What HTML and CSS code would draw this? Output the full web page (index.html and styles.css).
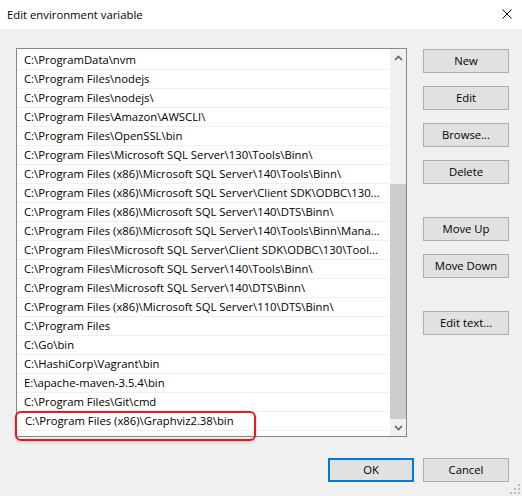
FILE: index.html
```html
<!DOCTYPE html>
<html lang="en">
<head>
<meta charset="utf-8">
<title>Edit environment variable</title>
<link rel="stylesheet" href="styles.css">
</head>
<body>
<div class="window">
  <div class="titlebar">
    <span class="title">Edit environment variable</span>
    <svg class="close" width="10" height="10" viewBox="0 0 10 10"><path d="M0.5 0.5 L9.5 9.5 M9.5 0.5 L0.5 9.5" stroke="#000" stroke-width="1" fill="none"/></svg>
  </div>
  <div class="client">
    <div class="main">
      <div class="listbox">
        <ul class="rows">
          <li class="row">C:\ProgramData\nvm</li>
          <li class="row">C:\Program Files\nodejs</li>
          <li class="row">C:\Program Files\nodejs\</li>
          <li class="row">C:\Program Files\Amazon\AWSCLI\</li>
          <li class="row">C:\Program Files\OpenSSL\bin</li>
          <li class="row">C:\Program Files\Microsoft SQL Server\130\Tools\Binn\</li>
          <li class="row">C:\Program Files (x86)\Microsoft SQL Server\140\Tools\Binn\</li>
          <li class="row">C:\Program Files (x86)\Microsoft SQL Server\Client SDK\ODBC\130...</li>
          <li class="row">C:\Program Files (x86)\Microsoft SQL Server\140\DTS\Binn\</li>
          <li class="row">C:\Program Files (x86)\Microsoft SQL Server\140\Tools\Binn\Mana...</li>
          <li class="row">C:\Program Files\Microsoft SQL Server\Client SDK\ODBC\130\Tool...</li>
          <li class="row">C:\Program Files\Microsoft SQL Server\140\Tools\Binn\</li>
          <li class="row">C:\Program Files\Microsoft SQL Server\140\DTS\Binn\</li>
          <li class="row">C:\Program Files (x86)\Microsoft SQL Server\110\DTS\Binn\</li>
          <li class="row">C:\Program Files</li>
          <li class="row">C:\Go\bin</li>
          <li class="row">C:\HashiCorp\Vagrant\bin</li>
          <li class="row">E:\apache-maven-3.5.4\bin</li>
          <li class="row">C:\Program Files\Git\cmd</li>
          <li class="row editing">C:\Program Files (x86)\Graphviz2.38\bin</li>
          <li class="row"></li>
        </ul>
        <div class="scrollbar">
          <div class="sb-btn">
            <svg width="9" height="6" viewBox="0 0 9 6"><path d="M1 5 L4.5 1.5 L8 5" stroke="#606060" stroke-width="1.6" fill="none"/></svg>
          </div>
          <div class="sb-track"><div class="sb-thumb"></div></div>
          <div class="sb-btn">
            <svg width="9" height="6" viewBox="0 0 9 6"><path d="M1 1 L4.5 4.5 L8 1" stroke="#606060" stroke-width="1.6" fill="none"/></svg>
          </div>
        </div>
        <div class="highlight"></div>
      </div>
      <div class="side">
        <div class="group">
          <button class="btn">New</button>
          <button class="btn">Edit</button>
          <button class="btn">Browse...</button>
          <button class="btn">Delete</button>
        </div>
        <div class="group">
          <button class="btn">Move Up</button>
          <button class="btn">Move Down</button>
        </div>
        <div class="group">
          <button class="btn">Edit text...</button>
        </div>
      </div>
    </div>
    <div class="footer">
      <button class="btn default">OK</button>
      <button class="btn">Cancel</button>
    </div>
    <svg class="grip" width="12" height="12" viewBox="0 0 12 12">
      <rect x="9" y="1" width="2" height="2" fill="#bcbcbc"/>
      <rect x="5" y="5" width="2" height="2" fill="#bcbcbc"/>
      <rect x="9" y="5" width="2" height="2" fill="#bcbcbc"/>
      <rect x="1" y="9" width="2" height="2" fill="#bcbcbc"/>
      <rect x="5" y="9" width="2" height="2" fill="#bcbcbc"/>
      <rect x="9" y="9" width="2" height="2" fill="#bcbcbc"/>
    </svg>
  </div>
</div>
</body>
</html>
```
FILE: styles.css
```css
* { box-sizing: border-box; }
html, body { margin: 0; padding: 0; }
body {
  width: 522px;
  height: 496px;
  overflow: hidden;
  font-family: "Open Sans", "Noto Sans", sans-serif;
  font-size: 11.3px;
  color: #000;
  background: #f0f0f0;
}
.window {
  width: 522px;
  height: 496px;
  display: flex;
  flex-direction: column;
}
.titlebar {
  height: 29px;
  background: #fff;
  display: flex;
  align-items: center;
  justify-content: space-between;
  padding: 0 10px 0 7px;
}
.title { line-height: 16px; padding-top: 1px; }
.close { display: block; margin-top: -1px; }
.client {
  position: relative;
  flex: 1;
  background: #f0f0f0;
  padding: 19px 13px 0 16px;
}
.main {
  display: flex;
  gap: 16px;
}
.listbox {
  position: relative;
  width: 391px;
  height: 389px;
  border: 1px solid #828790;
  background: #fff;
  display: flex;
}
.rows {
  list-style: none;
  margin: 0;
  padding: 2px 1px 0 0;
  width: 373px;
  height: 387px;
  overflow: hidden;
}
.row {
  height: 19px;
  line-height: 18px;
  border-bottom: 1px solid #f0f0f0;
  padding-left: 7px;
  white-space: nowrap;
  overflow: hidden;
  text-overflow: clip;
}
.row.editing { padding-left: 8px; }
.scrollbar {
  width: 16px;
  height: 387px;
  background: #f0f0f0;
  display: flex;
  flex-direction: column;
}
.sb-btn {
  height: 17px;
  display: flex;
  align-items: center;
  justify-content: center;
}
.sb-btn svg { display: block; }
.sb-track {
  flex: 1;
  padding-top: 118px;
}
.sb-thumb {
  height: 235px;
  background: #cdcdcd;
}
.highlight {
  position: absolute;
  left: -2px;
  top: 362px;
  width: 241px;
  height: 30px;
  border: 2px solid #e8161e;
  border-radius: 6px;
  box-shadow: 0 1px 3px rgba(0, 0, 0, 0.22);
  pointer-events: none;
}
.side {
  display: flex;
  flex-direction: column;
  gap: 33px;
  padding-top: 1px;
}
.group {
  display: flex;
  flex-direction: column;
  gap: 13px;
}
.btn {
  width: 86px;
  height: 24px;
  margin: 0;
  padding: 0;
  border: 1px solid #adadad;
  background: #e1e1e1;
  font-family: inherit;
  font-size: 11.3px;
  color: #000;
  line-height: 20px;
  text-align: center;
}
.btn.default {
  border: 2px solid #0078d7;
}
.footer {
  display: flex;
  justify-content: flex-end;
  gap: 9px;
  margin-top: 21px;
}
.grip {
  position: absolute;
  right: 1px;
  bottom: 1px;
}
```
